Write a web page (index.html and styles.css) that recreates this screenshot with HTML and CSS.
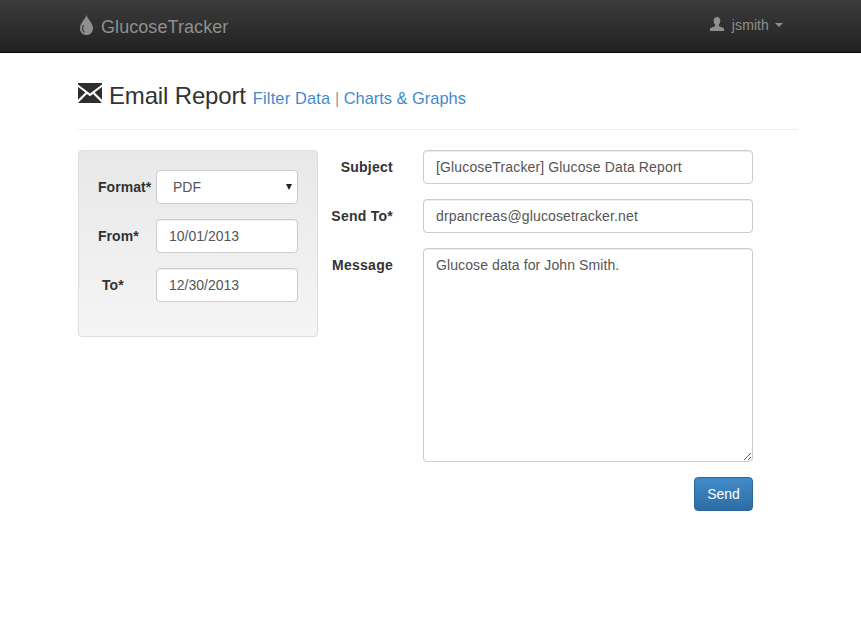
FILE: index.html
```html
<!DOCTYPE html>
<html lang="en">
<head>
    <meta charset="UTF-8">
    <meta name="viewport" content="width=device-width, initial-scale=1.0">
    <title>Email Report</title>
    <link rel="stylesheet" href="styles.css">
</head>
<body>
    <nav class="navbar">
        <a class="brand" href="#">
            <svg class="drop" width="13" height="20" viewBox="0 0 13 20"><path d="M6.5 0C7.5 4 13 8 13 13.4C13 17.1 10.1 20 6.5 20C2.9 20 0 17.1 0 13.4C0 8 5.5 4 6.5 0Z" fill="#8f8f8f"/><path d="M3.4 10C2.2 12.6 2.4 15.6 4.4 17.2" fill="none" stroke="#3a3a3a" stroke-width="1.2"/></svg>
            <span>GlucoseTracker</span>
        </a>
        <a class="user" href="#">
            <svg class="person" width="14" height="14" viewBox="0 0 14 14"><path d="M7 0C9.2 0 10.3 1.7 10.3 3.8C10.3 5.6 9.6 7 8.8 7.8V8.9L14 11.2V14H0V11.2L5.2 8.9V7.8C4.4 7 3.7 5.6 3.7 3.8C3.7 1.7 4.8 0 7 0Z" fill="#8f8f8f"/></svg>
            <span>jsmith</span>
            <span class="caret"></span>
        </a>
    </nav>

    <main class="page">
        <div class="page-header">
            <svg class="envelope" width="24" height="20" viewBox="0 0 24 20"><path d="M0 0H24V1.6L12 10.6L0 1.6Z" fill="#2e2e2e"/><path d="M0 4L7.4 9.6L0 16.8Z M24 4L16.6 9.6L24 16.8Z" fill="#2e2e2e"/><path d="M0 20L8.9 11L12 13.2L15.1 11L24 20Z" fill="#2e2e2e"/></svg>
            <h1>Email Report</h1>
            <div class="header-links">
                <a class="filter-link" href="#">Filter Data</a>
                <span class="sep">|</span>
                <a href="#">Charts &amp; Graphs</a>
            </div>
        </div>

        <div class="columns">
            <form class="well">
                <div class="well-row">
                    <label class="well-label">Format*</label>
                    <div class="select-box">PDF<span class="select-arrow"></span></div>
                </div>
                <div class="well-row">
                    <label class="well-label">From*</label>
                    <input class="field" type="text" value="10/01/2013">
                </div>
                <div class="well-row">
                    <label class="well-label label-to">To*</label>
                    <input class="field" type="text" value="12/30/2013">
                </div>
            </form>

            <form class="mail-form">
                <div class="mail-row">
                    <label class="mail-label">Subject</label>
                    <input class="field" type="text" value="[GlucoseTracker] Glucose Data Report">
                </div>
                <div class="mail-row">
                    <label class="mail-label">Send To*</label>
                    <input class="field" type="text" value="drpancreas@glucosetracker.net">
                </div>
                <div class="mail-row">
                    <label class="mail-label">Message</label>
                    <textarea class="field message">Glucose data for John Smith.</textarea>
                </div>
                <div class="actions">
                    <button class="btn" type="button">Send</button>
                </div>
            </form>
        </div>
    </main>
</body>
</html>
```

FILE: styles.css
```css
* {
    box-sizing: border-box;
}
body {
    margin: 0;
    background: #fff;
    color: #333;
    font-family: "Liberation Sans", Arial, sans-serif;
    font-size: 14px;
    line-height: 20px;
}
a {
    text-decoration: none;
}
.navbar {
    display: flex;
    justify-content: space-between;
    align-items: center;
    height: 53px;
    padding: 0 78px 0 80px;
    background: linear-gradient(to bottom, #3c3c3c, #222);
    border-bottom: 1px solid #080808;
}
.brand {
    display: flex;
    align-items: center;
    gap: 8px;
    color: #8f8f8f;
    font-size: 18px;
    letter-spacing: .07px;
}
.brand span {
    margin-top: 2px;
}
.drop {
    margin-top: -3px;
}
.user {
    display: flex;
    align-items: center;
    color: #8f8f8f;
    margin-top: -2px;
}
.person {
    margin-right: 8px;
    margin-top: -2px;
}
.user span:first-of-type {
    letter-spacing: .1px;
}
.caret {
    width: 0;
    height: 0;
    margin-left: 6px;
    border-top: 4px solid #8f8f8f;
    border-left: 4px solid transparent;
    border-right: 4px solid transparent;
}
.page {
    padding: 0 63px 0 78px;
}
.page-header {
    display: flex;
    align-items: baseline;
    height: 77px;
    padding-top: 28px;
    border-bottom: 1px solid #eee;
}
.envelope {
    align-self: flex-start;
    margin-top: 2px;
    margin-right: 7px;
}
h1 {
    margin: 0;
    font-size: 24px;
    font-weight: 400;
    line-height: 30px;
    color: #333;
    letter-spacing: -.16px;
}
.header-links {
    margin-left: 7px;
    font-size: 16.4px;
}
.header-links a {
    color: #428bca;
}
.header-links .filter-link {
    letter-spacing: .18px;
}
.sep {
    color: #999;
    margin: 0;
}
.columns {
    display: flex;
    align-items: flex-start;
    margin-top: 20px;
}
.well {
    display: flex;
    flex-direction: column;
    gap: 15px;
    width: 240px;
    height: 187px;
    padding: 19px 19px 0 19px;
    background: linear-gradient(to bottom, #e8e8e8, #f5f5f5);
    border: 1px solid #ddd;
    border-radius: 4px;
}
.well-row {
    display: flex;
    align-items: center;
}
.well-label {
    width: 58px;
    font-weight: 700;
    letter-spacing: .05px;
}
.label-to {
    padding-left: 4px;
}
.field {
    display: block;
    height: 34px;
    padding: 6px 12px;
    color: #555;
    background: #fff;
    border: 1px solid #ccc;
    border-radius: 4px;
    box-shadow: inset 0 1px 1px rgba(0, 0, 0, .075);
    font-family: inherit;
    font-size: 14px;
    line-height: 20px;
    width: 330px;
    letter-spacing: .14px;
}
.well .field {
    width: 142px;
    letter-spacing: 0;
}
.select-box {
    position: relative;
    width: 142px;
    height: 34px;
    padding: 6px 12px 6px 16px;
    color: #555;
    background: #fff;
    border: 1px solid #ccc;
    border-radius: 4px;
}
.select-arrow {
    position: absolute;
    top: 13px;
    right: 5px;
    border-top: 6px solid #222;
    border-left: 3.5px solid transparent;
    border-right: 3.5px solid transparent;
}
.mail-form {
    display: flex;
    flex-direction: column;
    gap: 15px;
    margin-left: 13px;
}
.mail-row {
    display: flex;
    align-items: flex-start;
}
.mail-label {
    width: 62px;
    margin-right: 30px;
    padding-top: 7px;
    font-weight: 700;
    text-align: right;
    white-space: nowrap;
    letter-spacing: .25px;
}
.message {
    height: 214px;
    resize: both;
    letter-spacing: .1px;
}
.actions {
    display: flex;
    justify-content: flex-end;
}
.btn {
    width: 59px;
    height: 34px;
    padding: 0;
    color: #fff;
    background: linear-gradient(to bottom, #428bca, #2d6ca2);
    border: 1px solid #2b669a;
    border-radius: 4px;
    font-family: inherit;
    font-size: 14px;
}
```
